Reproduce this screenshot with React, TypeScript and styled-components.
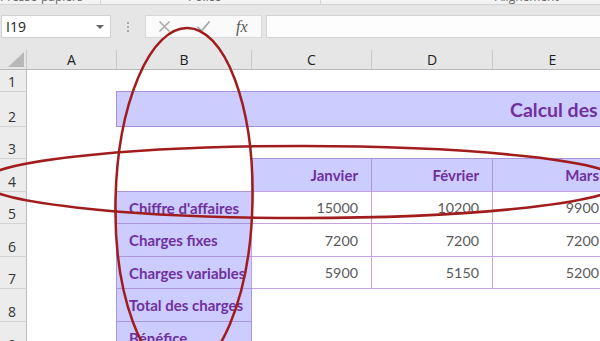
import React from "react";
import styled, { createGlobalStyle } from "styled-components";

const Global = createGlobalStyle`
  html, body { margin: 0; padding: 0; background: #fff; }
  body { width: 600px; height: 341px; overflow: hidden; }
  * { box-sizing: border-box; }
`;

const Page = styled.div`
  position: relative;
  width: 600px;
  height: 341px;
  overflow: hidden;
  background: #fff;
  font-family: "Open Sans", "Noto Sans", sans-serif;
`;

const Ribbon = styled.div`
  height: 5px;
  display: flex;
  background: #f3f3f3;
  border-bottom: 1px solid #d4d4d4;
  overflow: hidden;
`;

const RibbonGroup = styled.div<{ $w: number; $pad: number; $last?: boolean }>`
  flex: 0 0 ${(p) => p.$w}px;
  padding-left: ${(p) => p.$pad}px;
  border-right: ${(p) => (p.$last ? "none" : "1px solid #d6d6d6")};
  font-size: 12px;
  line-height: 15px;
  color: #666;
  margin-top: -11px;
  height: 16px;
  white-space: nowrap;
`;

const FormulaArea = styled.div`
  height: 45px;
  background: #e6e6e6;
  display: flex;
  align-items: flex-start;
  padding-top: 10px;
  padding-left: 1px;
`;

const NameBox = styled.div`
  position: relative;
  width: 110px;
  height: 23px;
  background: #fff;
  border: 1px solid #d0d0d0;
  font-size: 14px;
  line-height: 21px;
  padding-left: 4px;
  color: #222;
`;

const DropArrow = styled.span`
  position: absolute;
  right: 6px;
  top: 9px;
  width: 0;
  height: 0;
  border-left: 4px solid transparent;
  border-right: 4px solid transparent;
  border-top: 4px solid #666;
`;

const Dots = styled.div`
  width: 34px;
  height: 23px;
  display: flex;
  flex-direction: column;
  align-items: center;
  justify-content: center;
  gap: 2px;
`;

const Dot = styled.span`
  width: 2px;
  height: 2px;
  background: #a8a8a8;
`;

const FxBox = styled.div`
  width: 117px;
  height: 23px;
  background: #fafafa;
  border: 1px solid #d8d8d8;
  display: flex;
  align-items: center;
  padding-left: 12px;
`;

const FxButton = styled.div<{ $w: number }>`
  width: ${(p) => p.$w}px;
  display: flex;
  align-items: center;
  justify-content: flex-start;
`;

const FxText = styled.span`
  font-family: "Liberation Serif", "DejaVu Serif", serif;
  font-style: italic;
  font-size: 16px;
  color: #555;
`;

const FormulaInput = styled.div`
  flex: 1;
  margin-left: 4px;
  height: 23px;
  background: #fdfdfd;
  border: 1px solid #d4d4d4;
  border-right: none;
`;

const Sheet = styled.div`
  display: grid;
  grid-template-columns: 27px 90px 135px 120px 121px 120px 120px;
  grid-template-rows: 20px 22px 35px 32px 33px 32px 33px 32px 33px 33px;
  width: 733px;
`;

const Corner = styled.div`
  background: #e6e6e6;
  border-bottom: 1px solid #b9b9b9;
  border-right: 1px solid #c8c8c8;
  position: relative;
`;

const CornerTri = styled.span`
  position: absolute;
  right: 2px;
  bottom: 2px;
  width: 0;
  height: 0;
  border-left: 16px solid transparent;
  border-bottom: 15px solid #b7b7b7;
`;

const ColHead = styled.div`
  background: #e6e6e6;
  border-bottom: 1px solid #b9b9b9;
  border-right: 1px solid #c9c9c9;
  display: flex;
  align-items: center;
  justify-content: center;
  font-size: 14px;
  color: #222;
`;

const RowHead = styled.div`
  background: #ececec;
  border-bottom: 1px solid #d2d2d2;
  border-right: 1px solid #bdbdbd;
  display: flex;
  align-items: flex-end;
  justify-content: center;
  padding-bottom: 1px;
  padding-right: 2px;
  font-size: 14px;
  line-height: 17px;
  color: #333;
`;

const Cell = styled.div`
  background: #fff;
`;

const Boxed = styled.div<{ $fill?: boolean; $align?: "left" | "right"; $line: string }>`
  margin: -1px 0 0 -1px;
  border: 1px solid ${(p) => p.$line};
  background: ${(p) => (p.$fill ? "#ccccff" : "#fff")};
  display: flex;
  align-items: center;
  justify-content: ${(p) => (p.$align === "left" ? "flex-start" : "flex-end")};
  padding: ${(p) => (p.$align === "left" ? "0 0 0 12px" : "0 13px 0 0")};
  font-family: Lato, "Open Sans", sans-serif;
  white-space: nowrap;
  position: relative;
`;

const Label = styled.span`
  font-weight: 700;
  font-size: 15px;
  color: #7030a0;
`;

const Num = styled.span`
  font-size: 14.3px;
  color: #595959;
`;

const Title = styled.div`
  grid-column: 3 / 8;
  margin: -1px 0 0 -1px;
  border: 1px solid #a88fdc;
  background: #ccccff;
  display: flex;
  align-items: center;
  padding-left: 393px;
  font-family: Lato, "Open Sans", sans-serif;
  font-weight: 700;
  font-size: 19.5px;
  color: #7030a0;
  white-space: nowrap;
  overflow: hidden;
`;

const Overlay = styled.svg`
  position: absolute;
  left: 0;
  top: 0;
  pointer-events: none;
`;

const FILL_LINE = "#ad95de";
const DATA_LINE = "#c4a2e6";

const rows = [
  { label: "Chiffre d'affaires", v: ["15000", "10200", "9900", ""] },
  { label: "Charges fixes", v: ["7200", "7200", "7200", ""] },
  { label: "Charges variables", v: ["5900", "5150", "5200", ""] },
  { label: "Total des charges", v: null },
  { label: "Bénéfice", v: null },
];

export default function App() {
  const cols = ["A", "B", "C", "D", "E", "F"];
  return (
    <Page>
      <Global />
      <Ribbon>
        <RibbonGroup $w={101} $pad={0}>Presse-papiers</RibbonGroup>
        <RibbonGroup $w={220} $pad={87}>Police</RibbonGroup>
        <RibbonGroup $w={300} $pad={174} $last>Alignement</RibbonGroup>
      </Ribbon>
      <FormulaArea>
        <NameBox>
          I19
          <DropArrow />
        </NameBox>
        <Dots>
          <Dot />
          <Dot />
          <Dot />
        </Dots>
        <FxBox>
          <FxButton $w={38}>
            <svg width="13" height="13" viewBox="0 0 13 13">
              <path d="M1.5 1.5 L11.5 11.5 M11.5 1.5 L1.5 11.5" stroke="#a8a8a8" strokeWidth="1.5" fill="none" />
            </svg>
          </FxButton>
          <FxButton $w={40}>
            <svg width="15" height="13" viewBox="0 0 15 13">
              <path d="M1.5 7 L5.5 11 L13.5 1.5" stroke="#a8a8a8" strokeWidth="1.8" fill="none" />
            </svg>
          </FxButton>
          <FxButton $w={20}>
            <FxText>fx</FxText>
          </FxButton>
        </FxBox>
        <FormulaInput />
      </FormulaArea>
      <Sheet>
        <Corner>
          <CornerTri />
        </Corner>
        {cols.map((c) => (
          <ColHead key={c}>{c}</ColHead>
        ))}

        <RowHead>1</RowHead>
        {cols.map((c) => (
          <Cell key={"r1" + c} />
        ))}

        <RowHead>2</RowHead>
        <Cell />
        <Title>Calcul des bénéfices</Title>

        <RowHead>3</RowHead>
        {cols.map((c) => (
          <Cell key={"r3" + c} />
        ))}

        <RowHead>4</RowHead>
        <Cell />
        <Cell />
        <Boxed $fill $line={FILL_LINE}><Label>Janvier</Label></Boxed>
        <Boxed $fill $line={FILL_LINE}><Label>Février</Label></Boxed>
        <Boxed $fill $line={FILL_LINE}><Label>Mars</Label></Boxed>
        <Boxed $fill $line={FILL_LINE}><Label>Avril</Label></Boxed>

        {rows.map((r, i) => (
          <React.Fragment key={r.label}>
            <RowHead>{5 + i}</RowHead>
            <Cell />
            <Boxed $fill $align="left" $line={FILL_LINE}>
              <Label>{r.label}</Label>
            </Boxed>
            {r.v
              ? r.v.map((n, j) => (
                  <Boxed key={j} $line={DATA_LINE}>
                    <Num>{n}</Num>
                  </Boxed>
                ))
              : [0, 1, 2, 3].map((j) => <Cell key={j} />)}
          </React.Fragment>
        ))}
      </Sheet>
      <Overlay width="600" height="341" viewBox="0 0 600 341">
        <ellipse cx="302" cy="182" rx="320" ry="36" fill="none" stroke="#a11d1d" strokeWidth="2.5" />
        <ellipse
          cx="184"
          cy="201"
          rx="68.5"
          ry="173"
          fill="none"
          stroke="#a11d1d"
          strokeWidth="2.5"
          transform="rotate(1.2 184 201)"
        />
      </Overlay>
    </Page>
  );
}
